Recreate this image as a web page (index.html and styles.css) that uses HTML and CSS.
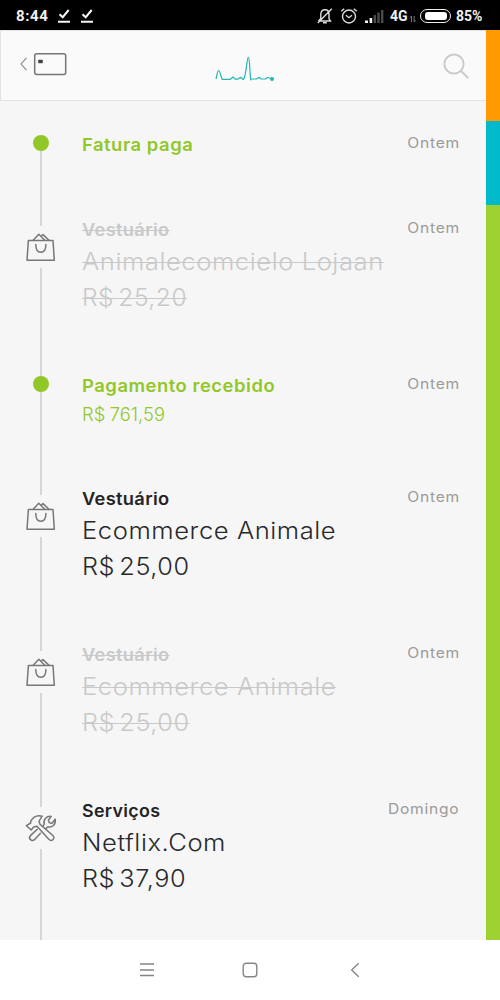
FILE: index.html
```html
<!DOCTYPE html>
<html lang="pt-BR">
<head>
<meta charset="utf-8">
<meta name="viewport" content="width=device-width, initial-scale=1">
<title>Fatura</title>
<link rel="stylesheet" href="styles.css">
</head>
<body>
<svg class="defs" width="0" height="0" aria-hidden="true">
  <symbol id="bag" viewBox="0 0 30 30">
    <path d="M2.4 8.5H27L28.3 28.2H1Z"/>
    <path d="M7.2 8.2L12.8 2.3L18.8 8.2M15 4.3L17 2.6L23 8.2"/>
    <path d="M9.8 12.5C9.8 17.5 11.8 20.2 14.8 20.2S19.9 17.5 19.9 12.5"/>
  </symbol>
  <symbol id="tools" viewBox="0 0 32 30">
    <path d="M1.4 12.7L6.2 17L8.6 14.1L12 13.2L23.8 26.3Q26 28.5 28 26.5Q30 24.4 27.8 22.5L14.9 11.1L14.1 8.2L17.2 3.2Q9.5 1.2 5.6 8.4L5.7 10Z"/>
    <path d="M17.7 13.4L19.2 11.4C18 6.7 21.2 2.8 26.2 3.4L23.4 7.2L24.3 9.8L27 10.2L30.2 6.1C31.2 11.4 27.5 14.8 22.8 13.9L20.7 15.8M15.5 20.3L9.5 26.7Q7.2 28.5 5.3 26.5Q3.5 24.6 5.6 22.4L12.3 16.2"/>
  </symbol>
  <symbol id="check" viewBox="0 0 14 16">
    <path d="M2.5 6.2L5.7 9.2L11.7 2M1 13.7H13"/>
  </symbol>
</svg>

<header class="status">
  <span class="clock">8:44</span>
  <svg class="check" width="14" height="16"><use href="#check"/></svg>
  <svg class="check" width="14" height="16"><use href="#check"/></svg>
  <div class="indicators">
    <svg class="bell" width="18" height="18" viewBox="0 0 18 18">
      <path d="M2.5 14H14.5L13 11.8V7.5Q13 2.8 9 2.8T4.8 7.5V11.6L2.5 14M7 15.8H10.8M1.8 16L15.8 1.8"/>
    </svg>
    <svg class="alarm" width="18" height="18" viewBox="0 0 18 18">
      <circle cx="9" cy="9.5" r="6.5"/>
      <path d="M5.9 8.2L9 10.7L12 8.2M1.3 4.3L4.2 1.7M13.8 1.7L16.7 4.3"/>
    </svg>
    <svg class="signal" width="19" height="14" viewBox="0 0 19 14">
      <path class="on" d="M0 11.5h3V14H0zM4.6 9h2.6v5H4.6z"/>
      <path class="off" d="M8.6 6h2.4v8H8.6zM12.3 3.5h2.4V14h-2.4zM16 1h2.4v13h-2.4z"/>
    </svg>
    <span class="network">4G</span>
    <svg class="data" width="6" height="8" viewBox="0 0 6 8"><path d="M1.5 7V1L.3 2.7M4.2 1V7L5.5 5.3"/></svg>
    <span class="battery"></span>
    <span class="percent">85%</span>
  </div>
</header>

<div class="screen">
  <main class="panel">
    <nav class="toolbar">
      <svg class="card-link" width="50" height="26" viewBox="0 0 50 26">
        <path class="chevron" d="M7.5 6.8L2 13L7.5 19.2"/>
        <rect class="card" x="15.7" y="2.7" width="31" height="20.8" rx="2"/>
        <rect class="chip" x="19.2" y="8.7" width="4.6" height="3.6" rx=".8"/>
      </svg>
      <svg class="pulse" width="60" height="28" viewBox="0 0 60 28">
        <path d="M1 24C2 20.5 2.3 15.5 3.7 15.5S5.8 22 7.3 24.3H15.5L18 22L20.2 24.1H23L25.5 22.3L28.3 24.5C31.4 22 31.7 2.3 33.3 2.3S34.6 18 35.8 25L36.6 24H41.5L44 22.3L46 24H50.5L52.5 22.5L56.5 23.5"/>
        <circle cx="57" cy="24" r="2"/>
      </svg>
      <svg class="search" width="28" height="28" viewBox="0 0 28 28">
        <circle cx="12" cy="11" r="9.6"/><path d="M18.8 17.8L26.3 25.3"/>
      </svg>
    </nav>

    <section class="feed">
      <article class="event short first">
        <div class="rail"><span class="dot"></span></div>
        <div class="body"><h2 class="title fatura">Fatura paga</h2></div>
        <time class="date">Ontem</time>
      </article>
      <article class="event struck">
        <div class="rail icon"><svg width="30" height="30"><use href="#bag"/></svg></div>
        <div class="body"><h2 class="title">Vestuário</h2><p class="name">Animalecomcielo Lojaan</p><p class="amount narrow">R<span>$</span>25,20</p></div>
        <time class="date">Ontem</time>
      </article>
      <article class="event medium">
        <div class="rail"><span class="dot"></span></div>
        <div class="body"><h2 class="title pagamento">Pagamento recebido</h2><p class="paid">R<span>$</span>761,59</p></div>
        <time class="date">Ontem</time>
      </article>
      <article class="event">
        <div class="rail icon"><svg width="30" height="30"><use href="#bag"/></svg></div>
        <div class="body"><h2 class="title">Vestuário</h2><p class="name">Ecommerce Animale</p><p class="amount">R<span>$</span>25,00</p></div>
        <time class="date">Ontem</time>
      </article>
      <article class="event struck">
        <div class="rail icon"><svg width="30" height="30"><use href="#bag"/></svg></div>
        <div class="body"><h2 class="title">Vestuário</h2><p class="name">Ecommerce Animale</p><p class="amount">R<span>$</span>25,00</p></div>
        <time class="date">Ontem</time>
      </article>
      <article class="event last">
        <div class="rail icon"><svg width="32" height="30"><use href="#tools"/></svg></div>
        <div class="body"><h2 class="title services">Serviços</h2><p class="name">Netflix.Com</p><p class="amount">R<span>$</span>37,90</p></div>
        <time class="date">Domingo</time>
      </article>
    </section>
  </main>
  <aside class="limits"><span class="open"></span><span class="current"></span><span class="available"></span></aside>
</div>

<footer class="system-nav">
  <svg width="14" height="16" viewBox="0 0 14 16"><path d="M0 2H14M0 8H14M0 13.5H14"/></svg>
  <svg width="16" height="16" viewBox="0 0 16 16"><rect x="1.2" y="1.2" width="13.6" height="13.6" rx="3"/></svg>
  <svg width="10" height="16" viewBox="0 0 10 16"><path d="M8.7 1.2L1.7 8L8.7 14.8"/></svg>
</footer>
</body>
</html>
```
FILE: styles.css
```css
* { box-sizing: border-box; }
body { margin: 0; width: 500px; height: 1000px; display: flex; flex-direction: column; overflow: hidden; background: #fff; font-family: Inter, "Liberation Sans", sans-serif; }
h2, p { margin: 0; font-weight: 400; white-space: nowrap; }
svg { display: block; fill: none; flex: none; }
.defs { position: absolute; }

.status { height: 30px; flex: none; display: flex; align-items: center; padding: 1px 16px 0; background: #000; color: #f0f0f0; font: 700 15px Roboto, sans-serif; }
.clock { width: 41px; letter-spacing: .6px; }
.check { margin-right: 9px; stroke: #f4f4f4; stroke-width: 2; }
.indicators { display: flex; align-items: center; margin-left: auto; }
.bell, .alarm { stroke: #ddd; stroke-width: 1.4; }
.alarm { margin-left: 6px; }
.signal { margin-left: 7px; }
.on { fill: #f4f4f4; }
.off { fill: #4b4b4b; }
.network { width: 20px; margin-left: 6px; font-size: 14px; }
.data { margin-top: 6px; stroke: #777; }
.battery { width: 31px; height: 14px; margin-left: 4px; border: 1.5px solid #eee; border-radius: 7px; padding: 2px 2px 2px 4px; }
.battery::before { content: ""; display: block; width: 22px; height: 8px; border-radius: 3px; background: #fff; }
.percent { width: 28px; margin-left: 5px; font-size: 14px; white-space: nowrap; }

.screen { height: 910px; flex: none; display: flex; }
.panel { width: 486px; background: #f6f6f6; }
.toolbar { height: 71px; display: flex; align-items: flex-start; background: #fafafa; border: solid #e3e3e3; border-width: 1px 0 1px 1px; }
.card-link { margin: 20px 0 0 18px; }
.chevron { stroke: #888; stroke-width: 1.1; }
.card { stroke: #757575; stroke-width: 1.5; }
.chip { fill: #444; }
.pulse { margin: 24px 0 0 146px; stroke: #25b5b3; stroke-width: 1.2; stroke-linejoin: round; }
.pulse circle { fill: #25b5b3; stroke: none; }
.search { margin: 22px 16px 0 auto; stroke: #ccc; stroke-width: 2; }

.limits { flex: 1; display: flex; flex-direction: column; }
.open { height: 91px; background: #ff9b00; }
.current { height: 84px; background: #00b9cb; }
.available { flex: 1; background: #9ed132; }

.feed { padding-top: 32px; }
.event { height: 156px; display: flex; color: #29292b; }
.event.short { height: 85px; }
.event.medium { height: 113px; }
.event.last { height: 141px; }
.rail { width: 82px; display: flex; justify-content: center; padding-top: 2px; background: linear-gradient(#d6d6d6, #d6d6d6) 40px 0 / 2px 100% no-repeat; }
.first .rail { background-position: 40px 10px; background-size: 2px 75px; }
.dot { width: 16px; height: 16px; border-radius: 50%; background: #92c728; }
.rail.icon { padding-top: 14px; background: linear-gradient(#d6d6d6 8px, transparent 8px 50px, #d6d6d6 50px) 40px 0 / 2px 100% no-repeat; }
.icon svg { stroke: #777; stroke-width: 1.5; stroke-linejoin: round; stroke-linecap: round; }
.body { flex: 1; }

.title, .name, .amount, .paid { width: max-content; transform-origin: left; }
.title { height: 26px; line-height: 24px; font-size: 17px; font-weight: 600; color: #242426; letter-spacing: .3px; transform: scaleX(1.075); }
.title.services { transform: scaleX(1.05); }
.name, .amount { line-height: 36px; font-size: 23.5px; font-weight: 300; letter-spacing: .5px; transform: scaleX(1.09); }
.amount { transform: scaleX(1.075); }
.amount.narrow { transform: scaleX(1.045); }
.amount span, .paid span { letter-spacing: 4.5px; }
.paid { line-height: 29px; font-size: 18px; font-weight: 300; color: #92c728; transform: scaleX(1.02); }
.title.fatura, .title.pagamento { font-size: 17.5px; color: #92c728; letter-spacing: .5px; transform: scaleX(1.052); }
.date { margin-right: 26.5px; height: 20px; line-height: 20px; font-size: 14.5px; color: #9b9b9b; letter-spacing: .7px; transform: scaleX(1.075); transform-origin: right; }
.struck h2, .struck p { color: #c9c9c9; text-decoration: line-through 1.3px; }

.system-nav { height: 60px; flex: none; display: flex; align-items: center; padding-left: 140px; stroke: #858585; stroke-width: 1.4; background: #fff; }
.system-nav svg:nth-child(2) { margin: 0 92px 0 88px; }
```
